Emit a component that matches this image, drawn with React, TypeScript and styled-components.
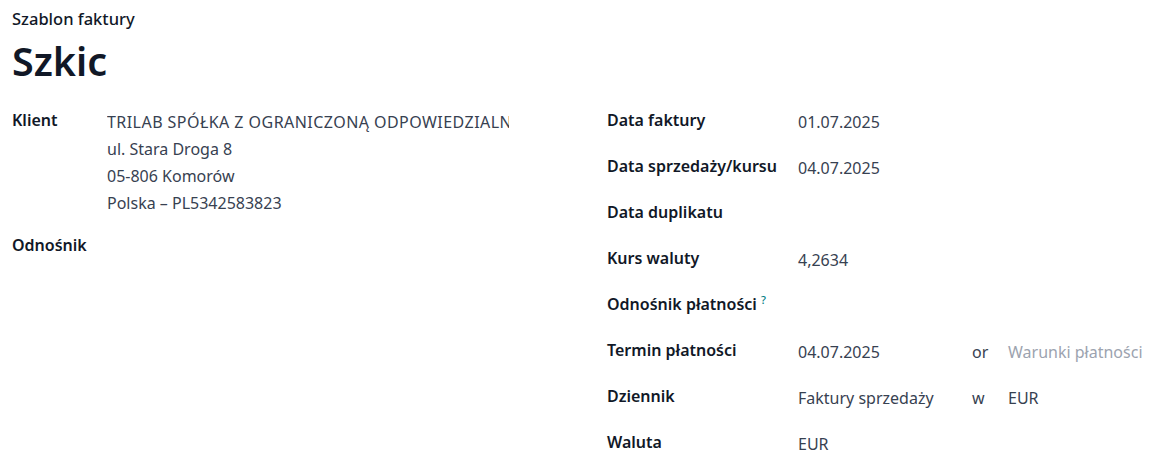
import React from 'react';
import styled, { createGlobalStyle } from 'styled-components';

const GlobalStyle = createGlobalStyle`
  html, body {
    margin: 0;
    padding: 0;
    background: #fff;
  }
  body {
    font-family: "Noto Sans", "Open Sans", sans-serif;
    font-size: 16px;
    color: #111827;
  }
`;

const Sheet = styled.div`
  padding: 8px 12px 0 12px;
`;

const Subtitle = styled.div`
  font-size: 16.5px;
  font-weight: 500;
  line-height: 24px;
  margin-top: -1px;
`;

const Title = styled.h1`
  margin: 4px 0 21px 0;
  font-size: 39.5px;
  font-weight: 600;
  line-height: 52px;
`;

const Groups = styled.div`
  display: grid;
  grid-template-columns: 595px 1fr;
`;

const Group = styled.div<{ $labelWidth: number }>`
  display: grid;
  grid-template-columns: ${(p) => p.$labelWidth}px 1fr;
  align-content: start;
`;

const Label = styled.div`
  font-weight: 600;
  line-height: 24px;
  padding-bottom: 22px;
  white-space: nowrap;
`;

const Help = styled.sup`
  color: #017e84;
  font-size: 11px;
  font-weight: 500;
  line-height: 0;
  margin-left: 4px;
`;

const Value = styled.div`
  color: #374151;
  line-height: 24px;
  padding-top: 2px;
`;

const Address = styled.div`
  color: #374151;
  line-height: 27px;
  padding-top: 1px;
  padding-bottom: 16px;
`;

const Clip = styled.div`
  width: 402px;
  overflow: hidden;
  white-space: nowrap;
  letter-spacing: 0.45px;
`;

const Inline = styled.div`
  display: grid;
  grid-template-columns: 174px 36px 1fr;
  color: #374151;
  line-height: 24px;
  padding-top: 2px;
  white-space: nowrap;
`;

const Joiner = styled.span`
  color: #374151;
`;

const Placeholder = styled.span`
  color: #9ca3af;
`;

export default function App() {
  return (
    <Sheet>
      <GlobalStyle />
      <Subtitle>Szablon faktury</Subtitle>
      <Title>Szkic</Title>
      <Groups>
        <Group $labelWidth={95}>
          <Label>Klient</Label>
          <Address>
            <Clip>TRILAB SPÓŁKA Z OGRANICZONĄ ODPOWIEDZIALNOŚCIĄ</Clip>
            <div>ul. Stara Droga 8</div>
            <div>05-806 Komorów</div>
            <div>Polska – PL5342583823</div>
          </Address>
          <Label>Odnośnik</Label>
          <Value />
        </Group>
        <Group $labelWidth={191}>
          <Label>Data faktury</Label>
          <Value>01.07.2025</Value>
          <Label>Data sprzedaży/kursu</Label>
          <Value>04.07.2025</Value>
          <Label>Data duplikatu</Label>
          <Value />
          <Label>Kurs waluty</Label>
          <Value>4,2634</Value>
          <Label>
            Odnośnik płatności<Help>?</Help>
          </Label>
          <Value />
          <Label>Termin płatności</Label>
          <Inline>
            <span>04.07.2025</span>
            <Joiner>or</Joiner>
            <Placeholder>Warunki płatności</Placeholder>
          </Inline>
          <Label>Dziennik</Label>
          <Inline>
            <span>Faktury sprzedaży</span>
            <Joiner>w</Joiner>
            <span>EUR</span>
          </Inline>
          <Label>Waluta</Label>
          <Value>EUR</Value>
        </Group>
      </Groups>
    </Sheet>
  );
}
